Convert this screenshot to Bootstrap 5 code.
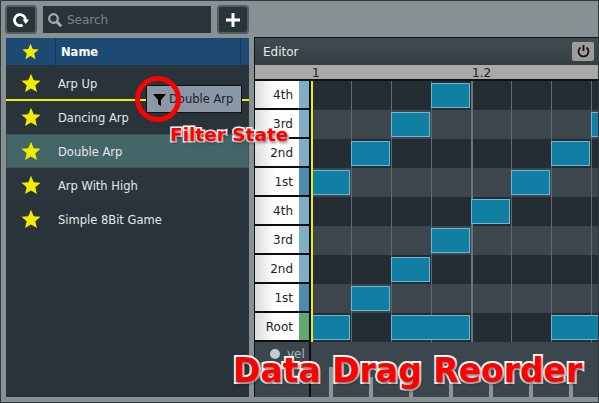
<!DOCTYPE html>
<html lang="en">
<head>
  <meta charset="UTF-8" />
  <title>Arp Editor</title>
  <link rel="stylesheet" href="https://cdn.jsdelivr.net/npm/bootstrap@5.3.3/dist/css/bootstrap.min.css" />
  <style>
    html, body { height: 100%; overflow: hidden; }
    body { background: #879092; font-family: "DejaVu Sans", sans-serif; font-size: 12px; color: #e4e8e8; }
    .app-frame { width: 599px; height: 403px; border: 1px solid #30383b; position: relative; overflow: hidden; padding: 4px 0 4px 4px; }
    .side-col { width: 244px; flex: none; }
    .tool-row { gap: 6px; }
    .tool-btn { width: 32px; height: 29px; padding: 0; flex: none; background: #29343a; border: 2px solid #545c5f; border-radius: 4px; }
    .tool-btn:hover { background: #29343a; border-color: #545c5f; }
    .search-box { height: 27px; background: #29343a; color: #7b8488; font-size: 12px; padding-left: 4px; margin: 1px 0; }
    .list-panel { background: #28333a; margin-left: 1px; margin-top: 4px; height: 359px; position: relative; }
    .list-head { height: 27px; background: #1d4a73; color: #fff; font-weight: 700; font-size: 11.5px; }
    .head-star { width: 50px; border-right: 1px solid #16395a; }
    .head-name { width: 185px; padding: 2px 0 0 5px; border-right: 1px solid #16395a; }
    #song-list { padding-top: 1px; font-size: 11.5px; }
    .song-row { height: 34px; padding-left: 15px; padding-top: 2px; gap: 17px; color: #e4e8e8; }
    .song-row svg { margin-top: -2px; }
    .song-row span { margin-top: 2px; }
    .song-row:nth-child(4) { background: #2b363c; }
    .song-row.row-sel { background: #446669; box-shadow: inset 0 0 0 1px #3a5658; }
    .drop-line { position: absolute; left: 0; right: 0; top: 61px; height: 2px; background: #f3ee00; }
    .drag-tip { position: absolute; left: 145px; top: 84px; width: 96px; height: 28px; background: #8a97a6; border: 1px solid #111; color: #1c2226; padding-left: 22px; line-height: 26px; font-size: 11.5px; }
    .drag-tip svg { position: absolute; left: 6px; top: 8px; }
    .editor-col { margin-left: 5px; margin-top: 32px; width: 346px; flex: none; border: 1px solid #0e1214; border-right: 0; border-bottom: 0; height: 360px; background: #3c474d; }
    .editor-head { height: 27px; background: linear-gradient(#414c51, #333d42); padding: 0 6px 0 8px; color: #e8ecec; }
    .editor-head span { margin-top: 1px; }
    .power-btn { width: 22px; height: 19px; padding: 0; background: #9c9c9c; border: 0; border-radius: 2px; margin-top: -1px; }
    .power-btn:hover { background: #9c9c9c; }
    .ruler-bar { height: 16px; background: #a9a9a9; border-bottom: 2px solid #111; color: #1d2326; line-height: 15px; position: relative; }
    .ruler-bar span { position: absolute; top: 1px; }
    .pitch-row { height: 29px; display: flex; border-bottom: 2px solid #0c0f10; }
    .key-cell { width: 44px; height: 27px; flex: none; background: linear-gradient(90deg, #dcdcdc, #fff 45%); color: #222; text-align: right; padding-right: 6px; line-height: 29px; }
    .key-strip { width: 10px; flex: none; height: 27px; }
    .strip-a { background: #7fadc9; }
    .strip-b { background: #4d8bb0; }
    .strip-c { background: #5fa876; }
    .note-lane { width: 290px; height: 29px; flex: none; margin-bottom: -2px; display: grid; grid-template-columns: repeat(8, 40px); position: relative; background-image: repeating-linear-gradient(90deg, #5f696e 0 1px, transparent 1px 40px); }
    .note-lane.lane-dark { background-color: #232d33; }
    .note-lane.lane-light { background-color: #3c464c; }
    .key-gap { width: 2px; flex: none; height: 29px; margin-bottom: -2px; background: #0c0f10; }
    .note-lane::before { content: ""; position: absolute; left: 160px; top: 0; bottom: 0; width: 2px; background: #6b7478; }
    .play-head { position: absolute; left: 0; top: 0; bottom: 0; width: 2px; background: #f3ee00; z-index: 2; }
    .note-box { height: 25px; margin: 2px 1px 2px 0; background: #117ea4; border: 1px solid #6fb9d0; grid-row: 1; position: relative; z-index: 1; }
    .vel-wrap { height: 55px; }
    .vel-side { width: 56px; flex: none; border-right: 2px solid #0c0f10; padding: 3px 0 0 15px; gap: 7px; color: #aeb5b8; }
    .vel-knob { width: 10px; height: 10px; border-radius: 50%; background: #c6cbcd; margin-top: 4px; }
    .vel-bars { padding-left: 18px; gap: 36px; }
    .vel-bar { width: 4px; background: #8f9698; }
    .note-ring { position: absolute; left: 134px; top: 75px; width: 46px; height: 46px; border: 5px solid #f00; border-radius: 50%; }
    .call-text { position: absolute; color: #f00; font-family: "DejaVu Sans", sans-serif; font-weight: 700; white-space: nowrap; -webkit-text-stroke: 4px #fff; paint-order: stroke fill; text-shadow: 1px 2px 3px rgba(0,0,0,.55); line-height: 1; }
    .call-filter { left: 169px; top: 125px; font-size: 18.5px; -webkit-text-stroke-width: 3px; }
    .call-drag { left: 232px; top: 353px; font-size: 33px; }
  </style>
</head>
<body>
  <div class="app-frame d-flex">
    <div class="side-col">
      <div class="tool-row d-flex align-items-center">
        <button class="btn tool-btn d-flex align-items-center justify-content-center">
          <svg width="18" height="18" viewBox="0 0 18 18"><path d="M10.6 14A5.5 5.5 0 1 1 13.5 9" fill="none" stroke="#fff" stroke-width="2.8"/><path d="M10.5 8.5h6.5l-3.2 4.5z" fill="#fff"/></svg>
        </button>
        <div class="search-box d-flex align-items-center flex-grow-1 gap-1">
          <svg width="16" height="16" viewBox="0 0 16 16"><circle cx="6.5" cy="6.5" r="4.3" fill="none" stroke="#a6adb0" stroke-width="2.2"/><path d="M9.8 9.8l4.4 4.4" stroke="#a6adb0" stroke-width="3"/></svg>
          <span>Search</span>
        </div>
        <button class="btn tool-btn d-flex align-items-center justify-content-center">
          <svg width="16" height="16" viewBox="0 0 16 16"><path d="M8 1v14M1 8h14" stroke="#fff" stroke-width="3"/></svg>
        </button>
      </div>
      <div class="list-panel">
        <div class="list-head d-flex">
          <div class="head-star d-flex align-items-center justify-content-center"><svg width="17" height="17" viewBox="0 0 24 24"><use href="#star-shape"/></svg></div>
          <div class="head-name d-flex align-items-center">Name</div>
        </div>
        <div id="song-list"></div>
        <div class="drop-line"></div>
      </div>
    </div>

    <div class="editor-col">
      <div class="editor-head d-flex align-items-center justify-content-between">
        <span>Editor</span>
        <button class="btn power-btn d-flex align-items-center justify-content-center">
          <svg width="13" height="14" viewBox="0 0 13 14"><path d="M3.6 3.4a5 5 0 1 0 5.8 0" fill="none" stroke="#111" stroke-width="1.8"/><path d="M6.5 1v6" stroke="#111" stroke-width="1.8"/></svg>
        </button>
      </div>
      <div class="ruler-bar"><span style="left:57px">1</span><span style="left:217px">1.2</span></div>
      <div id="pitch-rows"></div>
      <div class="vel-wrap d-flex">
        <div class="vel-side d-flex"><div class="vel-knob"></div><span>vel</span></div>
        <div class="vel-bars d-flex align-items-end" id="vel-bars"></div>
      </div>
    </div>

    <div class="drag-tip">
      <svg width="13" height="12" viewBox="0 0 13 12"><path d="M0 0h13L8 6v6L5 10V6z" fill="#000"/></svg>
      Double Arp
    </div>
    <div class="note-ring"></div>
    <div class="call-text call-filter">Filter State</div>
    <div class="call-text call-drag">Data Drag Reorder</div>
  </div>

  <svg width="0" height="0" class="position-absolute">
    <defs><path id="star-shape" d="M12 1l3.2 7.6 8.3.7-6.3 5.4 1.9 8.1L12 18.5l-7.1 4.3 1.9-8.1L.5 9.3l8.3-.7z" fill="#f0ec00"/></defs>
  </svg>

  <script>
    const songs = ['Arp Up', 'Dancing Arp', 'Double Arp', 'Arp With High', 'Simple 8Bit Game'];
    const songList = document.getElementById('song-list');
    songList.innerHTML = songs.map(s => `
      <div class="song-row d-flex align-items-center ${s === 'Double Arp' ? 'row-sel' : ''}">
        <svg width="20" height="20" viewBox="0 0 24 24"><use href="#star-shape"/></svg>
        <span>${s}</span>
      </div>`).join('');

    // [label, strip colour, notes as [column, length]]
    const pitches = [
      ['4th', 'a', [[3, 1]]],
      ['3rd', 'a', [[2, 1], [7, 1]]],
      ['2nd', 'a', [[1, 1], [6, 1]]],
      ['1st', 'b', [[0, 1], [5, 1]]],
      ['4th', 'a', [[4, 1]]],
      ['3rd', 'a', [[3, 1]]],
      ['2nd', 'a', [[2, 1]]],
      ['1st', 'b', [[1, 1]]],
      ['Root', 'c', [[0, 1], [2, 2], [6, 2]]]
    ];
    document.getElementById('pitch-rows').innerHTML = pitches.map((p, i) => `
      <div class="pitch-row">
        <div class="key-cell">${p[0]}</div>
        <div class="key-strip strip-${p[1]}"></div>
        <div class="key-gap"></div>
        <div class="note-lane ${i % 2 ? 'lane-light' : 'lane-dark'}">
          <div class="play-head"></div>
          ${p[2].map(n => `<div class="note-box" style="grid-column:${n[0] + 1} / span ${n[1]}"></div>`).join('')}
        </div>
      </div>`).join('');

    const velHeights = [30, 20, 6, 16, 20, 16, 20];
    document.getElementById('vel-bars').innerHTML = velHeights.map(h => `<div class="vel-bar" style="height:${h}px"></div>`).join('');
  </script>
</body>
</html>
